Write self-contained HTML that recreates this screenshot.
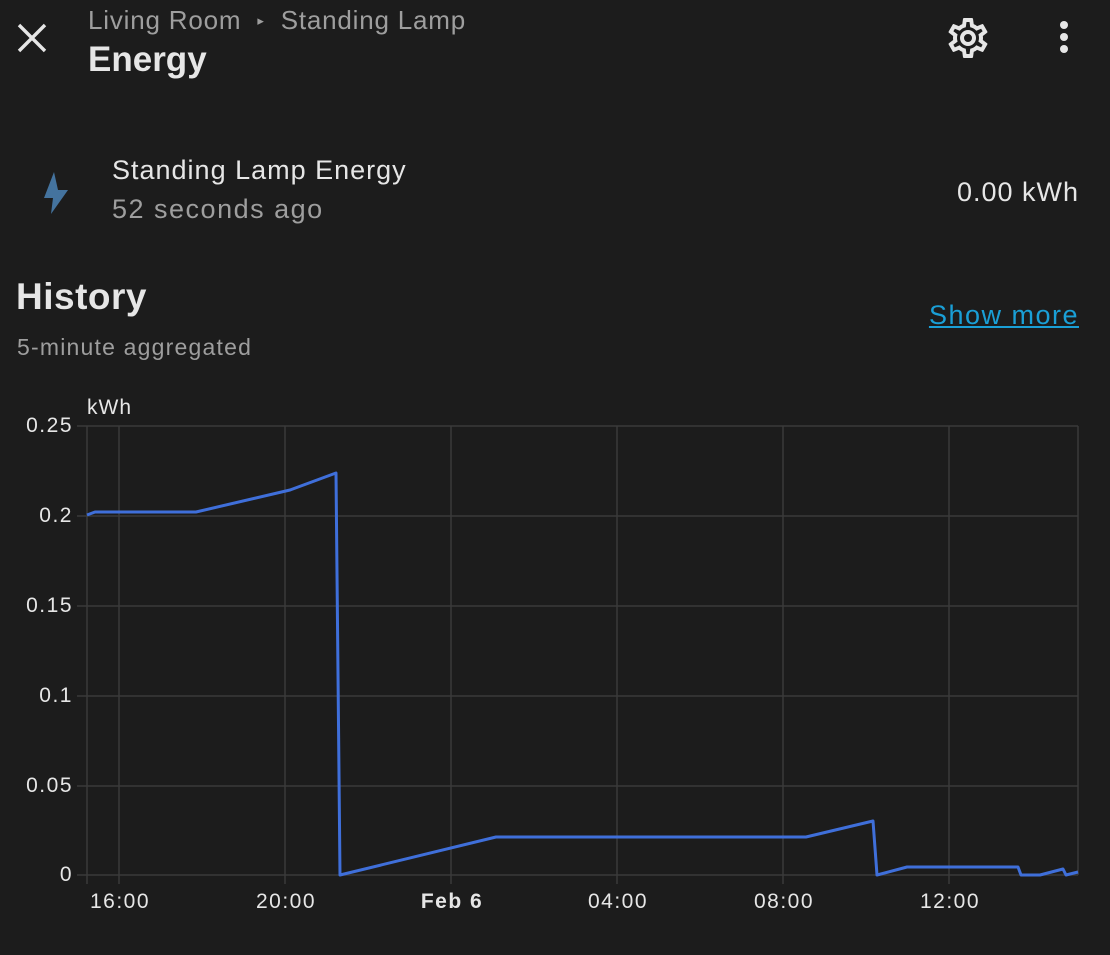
<!DOCTYPE html>
<html><head><meta charset="utf-8"><style>
body{margin:0;width:1110px;height:955px;background:#1c1c1c;overflow:hidden;font-family:"Liberation Sans",sans-serif;position:relative}
.a{position:absolute;white-space:nowrap}
</style></head><body>
<svg class="a" style="left:16px;top:22px" width="32" height="32" viewBox="0 0 32 32"><path d="M3 3L29 29M29 3L3 29" stroke="#e6e6e6" stroke-width="3.4"/></svg>
<div class="a" style="left:88px;top:5px;font-size:26px;letter-spacing:0.8px;color:#9e9e9e">Living Room <span style="font-size:13px;position:relative;top:-4px;margin:0 8px">▸</span> Standing Lamp</div>
<div class="a" style="left:88px;top:40px;font-size:35px;font-weight:bold;color:#e6e6e6">Energy</div>
<svg class="a" style="left:944px;top:14px" width="48" height="48" viewBox="0 0 24 24"><path fill="#e6e6e6" d="M12,8A4,4 0 0,1 16,12A4,4 0 0,1 12,16A4,4 0 0,1 8,12A4,4 0 0,1 12,8M12,10A2,2 0 0,0 10,12A2,2 0 0,0 12,14A2,2 0 0,0 14,12A2,2 0 0,0 12,10M10,22C9.750,22 9.54,21.82 9.5,21.58L9.13,18.93C8.5,18.68 7.96,18.34 7.44,17.94L4.95,18.950C4.73,19.03 4.46,18.95 4.34,18.73L2.34,15.27C2.21,15.05 2.27,14.78 2.46,14.63L4.57,12.97L4.5,12L4.57,11L2.46,9.37C2.27,9.22 2.21,8.95 2.34,8.73L4.34,5.27C4.46,5.05 4.73,4.96 4.95,5.05L7.44,6.05C7.96,5.66 8.5,5.32 9.13,5.07L9.5,2.42C9.54,2.18 9.75,2 10,2H14C14.25,2 14.46,2.18 14.5,2.42L14.87,5.07C15.5,5.32 16.04,5.66 16.56,6.05L19.05,5.05C19.27,4.96 19.54,5.05 19.66,5.27L21.66,8.73C21.79,8.95 21.73,9.22 21.54,9.37L19.43,11L19.5,12L19.43,13L21.54,14.63C21.73,14.78 21.79,15.05 21.66,15.27L19.66,18.73C19.54,18.95 19.27,19.04 19.05,18.95L16.56,17.95C16.04,18.34 15.5,18.68 14.87,18.93L14.5,21.58C14.46,21.82 14.25,22 14,22H10M11.25,4L10.88,6.61C9.68,6.86 8.62,7.5 7.85,8.39L5.44,7.35L4.69,8.65L6.8,10.2C6.4,11.37 6.4,12.64 6.8,13.8L4.68,15.36L5.43,16.66L7.86,15.620C8.63,16.5 9.68,17.14 10.87,17.38L11.24,20H12.76L13.13,17.39C14.32,17.14 15.37,16.5 16.14,15.62L18.57,16.66L19.32,15.36L17.2,13.81C17.6,12.64 17.6,11.37 17.2,10.2L19.31,8.65L18.56,7.35L16.15,8.39C15.38,7.5 14.32,6.86 13.12,6.62L12.75,4H11.25Z"/></svg>
<svg class="a" style="left:1052px;top:18px" width="24" height="40" viewBox="0 0 24 40"><circle cx="12" cy="7" r="4" fill="#e6e6e6"/><circle cx="12" cy="19" r="4" fill="#e6e6e6"/><circle cx="12" cy="31" r="4" fill="#e6e6e6"/></svg>
<svg class="a" style="left:40px;top:170px" width="34" height="48" viewBox="0 0 34 48"><path d="M14 2L4 28H13L11 44L28 20H18L14 2Z" fill="#44739e"/></svg>
<div class="a" style="left:112px;top:155px;font-size:27px;letter-spacing:1px;color:#e6e6e6">Standing Lamp Energy</div>
<div class="a" style="left:112px;top:194px;font-size:27px;letter-spacing:1.5px;color:#9e9e9e">52 seconds ago</div>
<div class="a" style="right:31px;top:177px;font-size:27px;letter-spacing:1px;color:#e6e6e6">0.00 kWh</div>
<div class="a" style="left:16px;top:276px;font-size:37px;font-weight:bold;letter-spacing:0.5px;color:#e6e6e6">History</div>
<div class="a" style="left:17px;top:334px;font-size:23px;letter-spacing:1.2px;color:#9e9e9e">5-minute aggregated</div>
<div class="a" style="right:31px;top:300px;font-size:27px;letter-spacing:1.5px;text-decoration:underline;color:#1a9fd6">Show more</div>
<svg class="a" style="left:0;top:380px" width="1110" height="575" viewBox="0 380 1110 575" font-family="Liberation Sans,sans-serif">
<g stroke="#3a3a3a" stroke-width="1.5">
<path d="M77 426H1078M77 516H1078M77 606H1078M77 696H1078M77 786H1078M77 875H1078"/>
<path d="M87 426V884M119 426V884M285 426V884M451 426V884M617 426V884M783 426V884M949 426V884M1078 426V875"/>
</g>
<g fill="#e6e6e6" font-size="21" letter-spacing="1.5" text-anchor="end">
<text x="73" y="432">0.25</text><text x="73" y="522">0.2</text><text x="73" y="612">0.15</text><text x="73" y="702">0.1</text><text x="73" y="792">0.05</text><text x="73" y="881">0</text>
</g>
<text x="87" y="414" fill="#e6e6e6" font-size="21" letter-spacing="1">kWh</text>
<g fill="#e6e6e6" font-size="21" letter-spacing="1.5" text-anchor="middle">
<text x="120" y="908">16:00</text><text x="286" y="908">20:00</text><text x="452" y="908" font-weight="bold">Feb 6</text><text x="618" y="908">04:00</text><text x="784" y="908">08:00</text><text x="950" y="908">12:00</text>
</g>
<polyline fill="none" stroke="#3f6fda" stroke-width="3" stroke-linejoin="round" points="87,515 95,512 196,512 290,490 336,473 340,875 496,837 806,837 873,821 877,875 907,867 1018,867 1021,875 1040,875 1063,869 1066,875 1078,872"/>
</svg>
</body></html>
